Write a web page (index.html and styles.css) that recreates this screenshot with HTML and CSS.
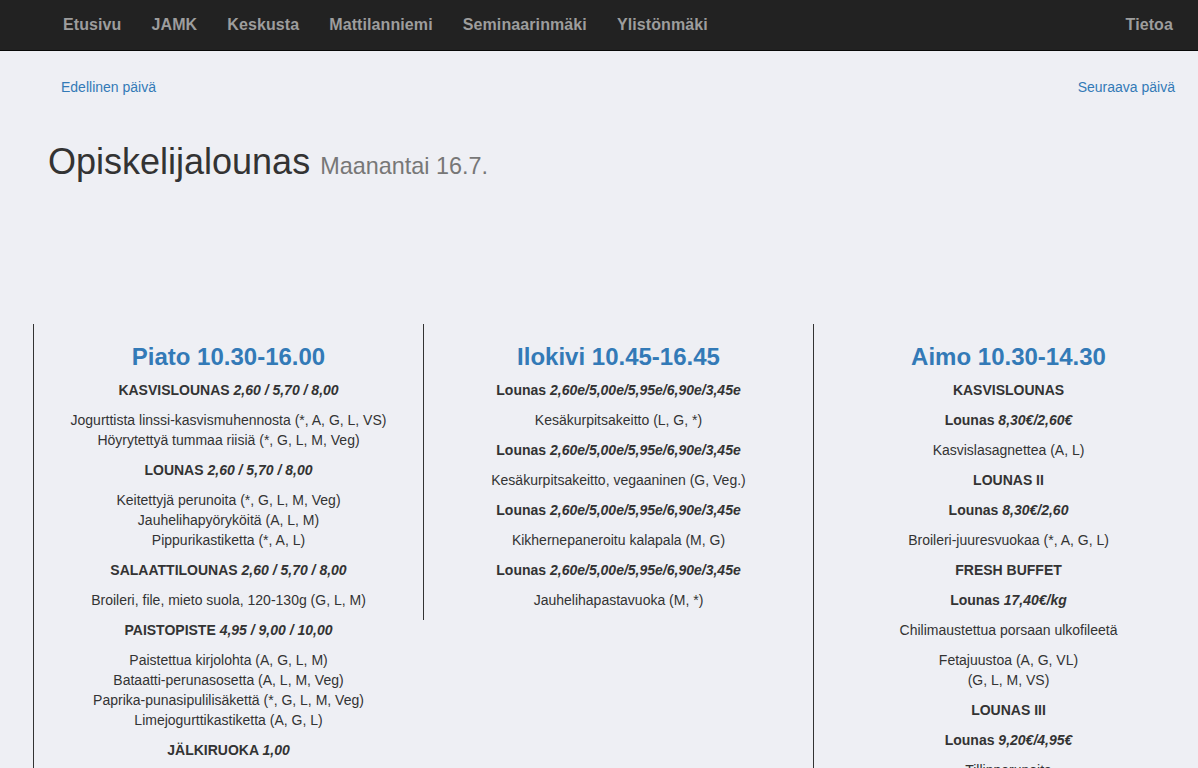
FILE: index.html
```html
<!DOCTYPE html>
<html lang="fi">
<head>
<meta charset="utf-8">
<title>Opiskelijalounas</title>
<link rel="stylesheet" href="styles.css">
</head>
<body>
<nav class="navbar">
  <ul class="nav">
    <li><a href="#">Etusivu</a></li>
    <li><a href="#">JAMK</a></li>
    <li><a href="#">Keskusta</a></li>
    <li><a href="#">Mattilanniemi</a></li>
    <li><a href="#">Seminaarinmäki</a></li>
    <li><a href="#">Ylistönmäki</a></li>
  </ul>
  <ul class="nav">
    <li><a href="#">Tietoa</a></li>
  </ul>
</nav>

<div class="daynav">
  <a href="#">Edellinen päivä</a>
  <a href="#">Seuraava päivä</a>
</div>

<h1 class="page-title">Opiskelijalounas <small>Maanantai 16.7.</small></h1>

<div class="menus">
  <section class="menu">
    <h2>Piato 10.30-16.00</h2>
    <p class="cat">KASVISLOUNAS <i>2,60 / 5,70 / 8,00</i></p>
    <p>Jogurttista linssi-kasvismuhennosta (*, A, G, L, VS)<br>Höyrytettyä tummaa riisiä (*, G, L, M, Veg)</p>
    <p class="cat">LOUNAS <i>2,60 / 5,70 / 8,00</i></p>
    <p>Keitettyjä perunoita (*, G, L, M, Veg)<br>Jauhelihapyöryköitä (A, L, M)<br>Pippurikastiketta (*, A, L)</p>
    <p class="cat">SALAATTILOUNAS <i>2,60 / 5,70 / 8,00</i></p>
    <p>Broileri, file, mieto suola, 120-130g (G, L, M)</p>
    <p class="cat">PAISTOPISTE <i>4,95 / 9,00 / 10,00</i></p>
    <p>Paistettua kirjolohta (A, G, L, M)<br>Bataatti-perunasosetta (A, L, M, Veg)<br>Paprika-punasipulilisäkettä (*, G, L, M, Veg)<br>Limejogurttikastiketta (A, G, L)</p>
    <p class="cat">JÄLKIRUOKA <i>1,00</i></p>
    <p>Mansikkakiisseliä (*, G, L, M, Veg)</p>
  </section>
  <section class="menu">
    <h2>Ilokivi 10.45-16.45</h2>
    <p class="cat">Lounas <i>2,60e/5,00e/5,95e/6,90e/3,45e</i></p>
    <p>Kesäkurpitsakeitto (L, G, *)</p>
    <p class="cat">Lounas <i>2,60e/5,00e/5,95e/6,90e/3,45e</i></p>
    <p>Kesäkurpitsakeitto, vegaaninen (G, Veg.)</p>
    <p class="cat">Lounas <i>2,60e/5,00e/5,95e/6,90e/3,45e</i></p>
    <p>Kikhernepaneroitu kalapala (M, G)</p>
    <p class="cat">Lounas <i>2,60e/5,00e/5,95e/6,90e/3,45e</i></p>
    <p>Jauhelihapastavuoka (M, *)</p>
  </section>
  <section class="menu">
    <h2>Aimo 10.30-14.30</h2>
    <p class="cat">KASVISLOUNAS</p>
    <p class="cat">Lounas <i>8,30€/2,60€</i></p>
    <p>Kasvislasagnettea (A, L)</p>
    <p class="cat">LOUNAS II</p>
    <p class="cat">Lounas <i>8,30€/2,60</i></p>
    <p>Broileri-juuresvuokaa (*, A, G, L)</p>
    <p class="cat">FRESH BUFFET</p>
    <p class="cat">Lounas <i>17,40€/kg</i></p>
    <p>Chilimaustettua porsaan ulkofileetä</p>
    <p>Fetajuustoa (A, G, VL)<br>(G, L, M, VS)</p>
    <p class="cat">LOUNAS III</p>
    <p class="cat">Lounas <i>9,20€/4,95€</i></p>
    <p>Tillinperunoita</p>
  </section>
</div>
</body>
</html>
```

FILE: styles.css
```css
html, body {
  overflow: hidden;
}

body {
  margin: 0;
  background: #eeeff4;
  color: #333;
  font-family: "Liberation Sans", Arial, Helvetica, sans-serif;
  font-size: 14px;
  line-height: 20px;
}

a {
  color: #337ab7;
  text-decoration: none;
}

.navbar {
  display: flex;
  justify-content: space-between;
  height: 50px;
  padding: 0 10px 0 48px;
  background: #222;
  border-bottom: 1px solid #080808;
}

.nav {
  display: flex;
  margin: 0;
  padding: 0;
  list-style: none;
}

.nav a {
  display: block;
  padding: 15px 15px;
  color: #9d9d9d;
  font-size: 16px;
  font-weight: bold;
  line-height: 20px;
  letter-spacing: 0.1px;
}

.daynav {
  display: flex;
  justify-content: space-between;
  margin: 26px 23px 0 61px;
}

.page-title {
  margin: 45px 0 0 48px;
  font-size: 36px;
  font-weight: normal;
  line-height: 40px;
  color: #333;
}

.page-title small {
  font-size: 65%;
  color: #777;
  font-weight: normal;
}

.menus {
  display: flex;
  align-items: flex-start;
  margin: 138px 0 0 33px;
  width: 1170px;
}

.menu {
  box-sizing: border-box;
  flex: 0 0 390px;
  width: 390px;
  padding: 0 15px;
  border-left: 1px solid #333;
  text-align: center;
}

.menu h2 {
  margin: 20px 0 10px;
  font-size: 24px;
  line-height: 26.4px;
  font-weight: bold;
  color: #337ab7;
}

.menu p {
  margin: 0 0 10px;
}

.menu .cat {
  font-weight: bold;
}
```
